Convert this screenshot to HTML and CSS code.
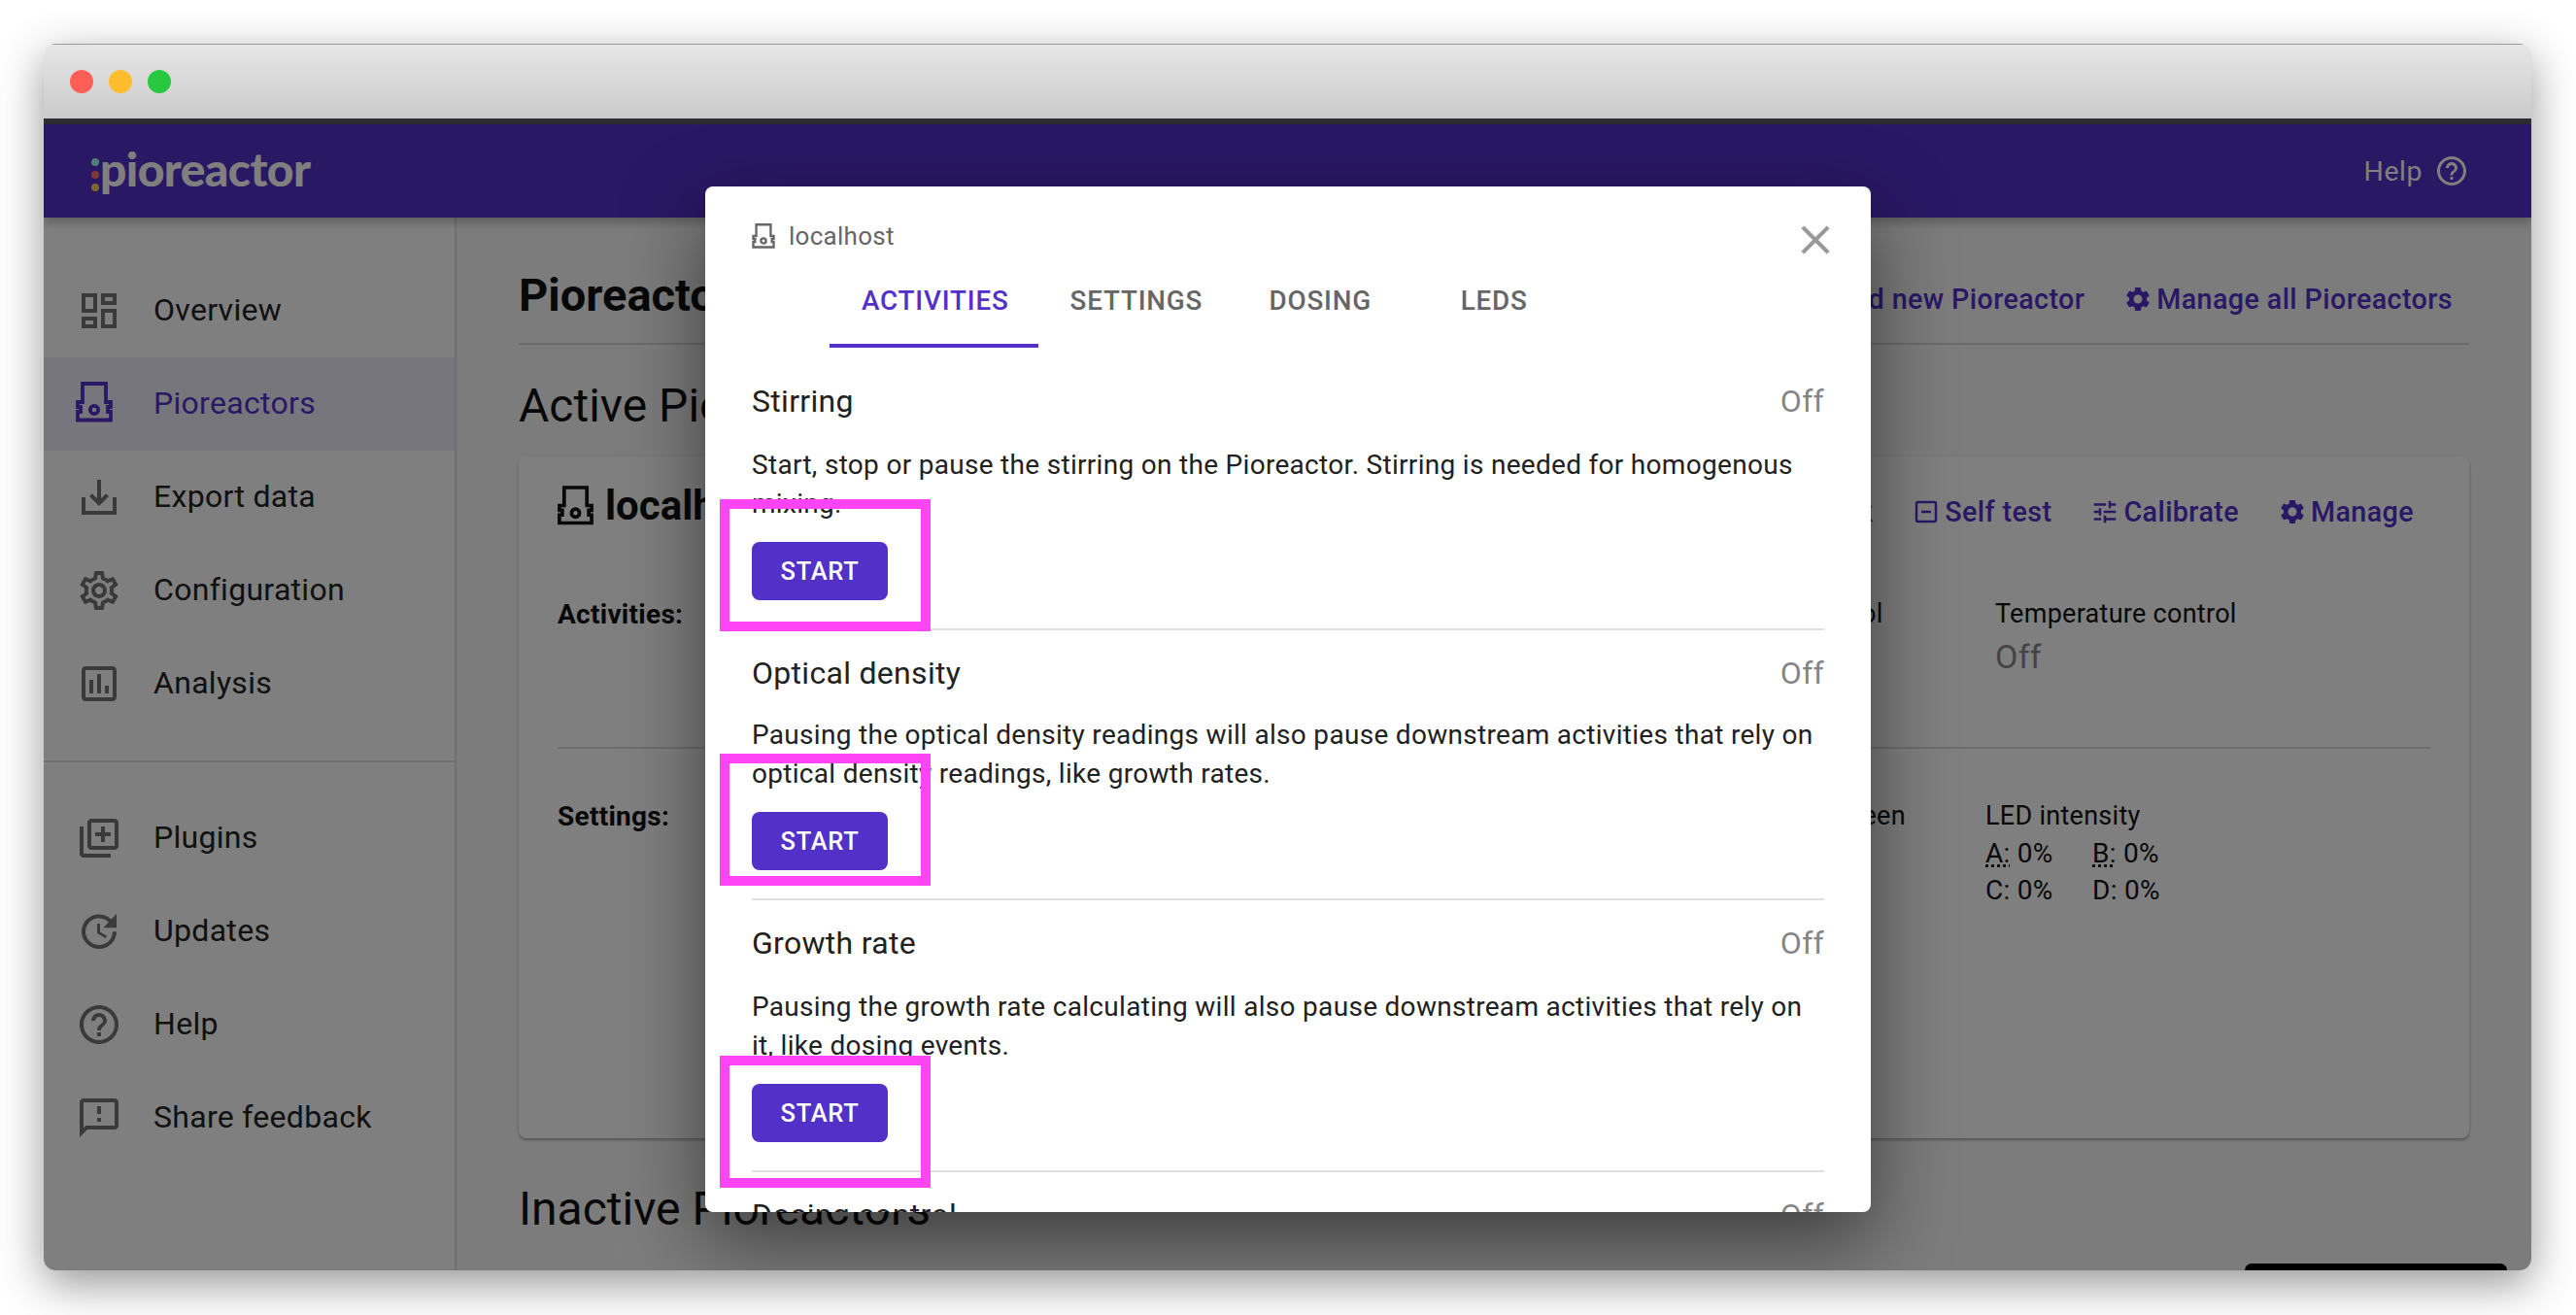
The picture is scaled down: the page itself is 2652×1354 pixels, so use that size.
FILE: index.html
```html
<!DOCTYPE html>
<html lang="en">
<head>
    <meta charset="UTF-8">
    <meta name="viewport" content="width=device-width, initial-scale=1.0">
    <title>Pioreactor - Pioreactors</title>
    <link rel="stylesheet" href="styles.css">
</head>
<body>

<!-- icon sprite -->
<svg class="sprite" xmlns="http://www.w3.org/2000/svg">
    <symbol id="i-dashboard" viewBox="0 0 24 24"><path d="M19 5v2h-4V5h4M9 5v6H5V5h4m10 8v6h-4v-6h4M9 17v2H5v-2h4M21 3h-8v6h8V3zM11 3H3v10h8V3zm10 8h-8v10h8V11zm-10 4H3v6h8v-6z"/></symbol>
    <symbol id="i-pioreactor" viewBox="0 0 38 42"><path fill="none" stroke="currentColor" stroke-width="3.8" d="M7 2H31V21H36V26H33V31H36V39.5H2V31H5V26H2V21H7Z"/><circle cx="19" cy="29" r="4.2" fill="none" stroke="currentColor" stroke-width="3.8"/></symbol>
    <symbol id="i-export" viewBox="0 0 24 24"><path d="M19 12v7H5v-7H3v9h18v-9h-2zm-6 .67l2.59-2.58L17 11.5l-5 5-5-5 1.41-1.41L11 12.67V3h2v9.67z"/></symbol>
    <symbol id="i-config" viewBox="0 0 24 24"><path d="M19.43 12.98c.04-.32.07-.64.07-.98 0-.34-.03-.66-.07-.98l2.11-1.65c.19-.15.24-.42.12-.64l-2-3.46c-.09-.16-.26-.25-.44-.25-.06 0-.12.01-.17.03l-2.49 1c-.52-.4-1.08-.73-1.69-.98l-.38-2.65C14.46 2.18 14.25 2 14 2h-4c-.25 0-.46.18-.49.42l-.38 2.65c-.61.25-1.17.59-1.69.98l-2.49-1c-.06-.02-.12-.03-.18-.03-.17 0-.34.09-.43.25l-2 3.46c-.13.22-.07.49.12.64l2.11 1.65c-.04.32-.07.65-.07.98 0 .33.03.66.07.98l-2.11 1.65c-.19.15-.24.42-.12.64l2 3.46c.09.16.26.25.44.25.06 0 .12-.01.17-.03l2.49-1c.52.4 1.08.73 1.69.98l.38 2.65c.03.24.24.42.49.42h4c.25 0 .46-.18.49-.42l.38-2.65c.61-.25 1.17-.59 1.69-.98l2.49 1c.06.02.12.03.18.03.17 0 .34-.09.43-.25l2-3.46c.12-.22.07-.49-.12-.64l-2.11-1.65zm-1.98-1.71c.04.31.05.52.05.73 0 .21-.02.43-.05.73l-.14 1.13.89.7 1.08.84-.7 1.21-1.27-.51-1.04-.42-.9.68c-.43.32-.84.56-1.25.73l-1.06.43-.16 1.13-.2 1.35h-1.4l-.19-1.35-.16-1.13-1.06-.43c-.43-.18-.83-.41-1.23-.71l-.91-.7-1.06.43-1.27.51-.7-1.21 1.08-.84.89-.7-.14-1.13c-.03-.31-.05-.54-.05-.74s.02-.43.05-.73l.14-1.13-.89-.7-1.08-.84.7-1.21 1.27.51 1.04.42.9-.68c.43-.32.84-.56 1.25-.73l1.06-.43.16-1.13.2-1.35h1.39l.19 1.35.16 1.13 1.06.43c.43.18.83.41 1.23.71l.91.7 1.06-.43 1.27-.51.7 1.21-1.07.85-.89.7.14 1.13zM12 8c-2.21 0-4 1.79-4 4s1.79 4 4 4 4-1.79 4-4-1.79-4-4-4zm0 6c-1.1 0-2-.9-2-2s.9-2 2-2 2 .9 2 2-.9 2-2 2z"/></symbol>
    <symbol id="i-chart" viewBox="0 0 24 24"><path d="M9 17H7v-7h2v7zm4 0h-2V7h2v10zm4 0h-2v-4h2v4zm2 2H5V5h14v14zm0-16H5c-1.1 0-2 .9-2 2v14c0 1.1.9 2 2 2h14c1.1 0 2-.9 2-2V5c0-1.1-.9-2-2-2z"/></symbol>
    <symbol id="i-plugins" viewBox="0 0 24 24"><path d="M4 6H2v14c0 1.1.9 2 2 2h14v-2H4V6zm16-4H8c-1.1 0-2 .9-2 2v12c0 1.1.9 2 2 2h12c1.1 0 2-.9 2-2V4c0-1.1-.9-2-2-2zm0 14H8V4h12v12zm-7-2h2v-3h3V9h-3V6h-2v3h-3v2h3z"/></symbol>
    <symbol id="i-update" viewBox="0 0 24 24"><path d="M21 10.12h-6.78l2.74-2.82c-2.73-2.7-7.15-2.8-9.88-.1-2.73 2.71-2.73 7.08 0 9.79s7.15 2.71 9.88 0C18.32 15.65 19 14.08 19 12.1h2c0 1.98-.88 4.55-2.64 6.29-3.51 3.48-9.21 3.48-12.72 0-3.5-3.47-3.53-9.11-.02-12.58s9.14-3.47 12.65 0L21 3v7.12zM12.5 8v4.25l3.5 2.08-.72 1.21L11 13V8h1.5z"/></symbol>
    <symbol id="i-help" viewBox="0 0 24 24"><path d="M11 18h2v-2h-2v2zm1-16C6.48 2 2 6.48 2 12s4.48 10 10 10 10-4.48 10-10S17.52 2 12 2zm0 18c-4.41 0-8-3.59-8-8s3.59-8 8-8 8 3.59 8 8-3.59 8-8 8zm0-14c-2.21 0-4 1.79-4 4h2c0-1.1.9-2 2-2s2 .9 2 2c0 2-3 1.75-3 5h2c0-2.25 3-2.5 3-5 0-2.21-1.79-4-4-4z"/></symbol>
    <symbol id="i-feedback" viewBox="0 0 24 24"><path d="M20 2H4c-1.1 0-1.99.9-1.99 2L2 22l4-4h14c1.1 0 2-.9 2-2V4c0-1.1-.9-2-2-2zm0 14H5.17L4 17.17V4h16v12zm-9-4h2v2h-2zm0-6h2v4h-2z"/></symbol>
    <symbol id="i-close" viewBox="0 0 24 24"><path d="M19 6.41L17.59 5 12 10.59 6.41 5 5 6.41 10.59 12 5 17.59 6.41 19 12 13.41 17.59 19 19 17.59 13.41 12z"/></symbol>
    <symbol id="i-gear" viewBox="0 0 24 24"><path d="M19.14 12.94c.04-.3.06-.61.06-.94 0-.32-.02-.64-.07-.94l2.03-1.58c.18-.14.23-.41.12-.61l-1.92-3.32c-.12-.22-.37-.29-.59-.22l-2.39.96c-.5-.38-1.03-.7-1.62-.94l-.36-2.54c-.04-.24-.24-.41-.48-.41h-3.84c-.24 0-.43.17-.47.41l-.36 2.54c-.59.24-1.13.57-1.62.94l-2.39-.96c-.22-.08-.47 0-.59.22L2.74 8.87c-.12.21-.08.47.12.61l2.03 1.58c-.05.3-.09.63-.09.94s.02.64.07.94l-2.03 1.58c-.18.14-.23.41-.12.61l1.92 3.32c.12.22.37.29.59.22l2.39-.96c.5.38 1.03.7 1.62.94l.36 2.54c.05.24.24.41.48.41h3.84c.24 0 .44-.17.47-.41l.36-2.54c.59-.24 1.13-.56 1.62-.94l2.39.96c.22.08.47 0 .59-.22l1.92-3.32c.12-.22.07-.47-.12-.61l-2.01-1.58zM12 15.6c-1.98 0-3.6-1.62-3.6-3.6s1.62-3.6 3.6-3.6 3.6 1.62 3.6 3.6-1.62 3.6-3.6 3.6z"/></symbol>
    <symbol id="i-selftest" viewBox="0 0 24 24"><path d="M8 11h8v2H8zm11-8H5c-1.1 0-2 .9-2 2v14c0 1.1.9 2 2 2h14c1.1 0 2-.9 2-2V5c0-1.1-.9-2-2-2zm0 16H5V5h14v14z"/></symbol>
    <symbol id="i-tune" viewBox="0 0 24 24"><path d="M3 17v2h6v-2H3zM3 5v2h10V5H3zm10 16v-2h8v-2h-8v-2h-2v6h2zM7 9v2H3v2h4v2h2V9H7zm14 4v-2H11v2h10zm-6-4h2V7h4V5h-4V3h-2v6z"/></symbol>
    <symbol id="i-blink" viewBox="0 0 24 24"><path d="M9 21c0 .55.45 1 1 1h4c.55 0 1-.45 1-1v-1H9v1zm3-19C8.14 2 5 5.14 5 9c0 2.38 1.19 4.47 3 5.74V17c0 .55.45 1 1 1h6c.55 0 1-.45 1-1v-2.26c1.81-1.27 3-3.36 3-5.74 0-3.86-3.14-7-7-7z"/></symbol>
</svg>

<div class="window">
    <div class="titlebar">
        <span class="light light-red"></span>
        <span class="light light-yellow"></span>
        <span class="light light-green"></span>
    </div>

    <header class="topbar">
        <div class="logo">
            <span class="logo-dots"><i class="dot-teal"></i><i class="dot-red"></i><i class="dot-orange"></i></span>
            <span>pioreactor</span>
        </div>
        <a class="help-link">Help <svg class="icon-help"><use href="#i-help"/></svg></a>
    </header>

    <div class="app-body">
        <nav class="sidebar">
            <a class="nav-item"><svg class="nav-icon"><use href="#i-dashboard"/></svg>Overview</a>
            <a class="nav-item active"><svg class="nav-icon nav-icon-pio"><use href="#i-pioreactor"/></svg>Pioreactors</a>
            <a class="nav-item"><svg class="nav-icon"><use href="#i-export"/></svg>Export data</a>
            <a class="nav-item"><svg class="nav-icon"><use href="#i-config"/></svg>Configuration</a>
            <a class="nav-item"><svg class="nav-icon"><use href="#i-chart"/></svg>Analysis</a>
            <div class="nav-divider"></div>
            <a class="nav-item"><svg class="nav-icon"><use href="#i-plugins"/></svg>Plugins</a>
            <a class="nav-item"><svg class="nav-icon"><use href="#i-update"/></svg>Updates</a>
            <a class="nav-item"><svg class="nav-icon"><use href="#i-help"/></svg>Help</a>
            <a class="nav-item"><svg class="nav-icon"><use href="#i-feedback"/></svg>Share feedback</a>
        </nav>

        <main class="content">
            <div class="page-head">
                <h1>Pioreactors</h1>
                <div class="page-links">
                    <a class="action">Add new Pioreactor</a>
                    <a class="action"><svg class="action-icon"><use href="#i-gear"/></svg>Manage all Pioreactors</a>
                </div>
            </div>

            <h2 class="section-title">Active Pioreactors</h2>

            <section class="card">
                <div class="card-head">
                    <div class="card-title"><svg class="card-title-icon"><use href="#i-pioreactor"/></svg>localhost</div>
                    <div class="card-actions">
                        <a class="action"><svg class="action-icon"><use href="#i-blink"/></svg>Blink</a>
                        <a class="action"><svg class="action-icon"><use href="#i-selftest"/></svg>Self test</a>
                        <a class="action"><svg class="action-icon"><use href="#i-tune"/></svg>Calibrate</a>
                        <a class="action"><svg class="action-icon"><use href="#i-gear"/></svg>Manage</a>
                    </div>
                </div>

                <div class="card-row card-row-activities">
                    <div class="row-label">Activities:</div>
                    <div class="cell"><div>Stirring</div><div class="cell-off">Off</div></div>
                    <div class="cell"><div>Optical density</div><div class="cell-off">Off</div></div>
                    <div class="cell"><div>Growth rate</div><div class="cell-off">Off</div></div>
                    <div class="cell"><div>Dosing control</div><div class="cell-off">Off</div></div>
                    <div class="cell"><div>LED control</div><div class="cell-off">Off</div></div>
                    <div class="cell"><div>Temperature control</div><div class="cell-off">Off</div></div>
                </div>

                <div class="card-row card-row-settings">
                    <div class="row-label">Settings:</div>
                    <div class="cell cell-between">Time between</div>
                    <div class="cell cell-leds">
                        <div>LED intensity</div>
                        <div class="led-grid">
                            <span><abbr>A:</abbr> 0%</span><span><abbr>B:</abbr> 0%</span>
                            <span>C: 0%</span><span>D: 0%</span>
                        </div>
                    </div>
                </div>
            </section>

            <h2 class="section-title section-inactive">Inactive Pioreactors</h2>
        </main>
    </div>

    <div class="backdrop"></div>
    <div class="snackbar"></div>

    <div class="modal">
        <div class="modal-head">
            <svg class="modal-head-icon"><use href="#i-pioreactor"/></svg>
            <span>localhost</span>
            <svg class="modal-close"><use href="#i-close"/></svg>
        </div>

        <div class="tabs">
            <a class="tab active">Activities</a>
            <a class="tab">Settings</a>
            <a class="tab">Dosing</a>
            <a class="tab">LEDs</a>
        </div>

        <div class="activity">
            <div class="activity-top"><span>Stirring</span><span class="off">Off</span></div>
            <p class="activity-desc">Start, stop or pause the stirring on the Pioreactor. Stirring is needed for homogenous mixing.</p>
            <div class="start-wrap"><button class="start-btn">Start</button><span class="mark mark-1"></span></div>
        </div>

        <div class="activity activity-short">
            <div class="activity-top"><span>Optical density</span><span class="off">Off</span></div>
            <p class="activity-desc">Pausing the optical density readings will also pause downstream activities that rely on optical density readings, like growth rates.</p>
            <div class="start-wrap"><button class="start-btn">Start</button><span class="mark mark-2"></span></div>
        </div>

        <div class="activity">
            <div class="activity-top"><span>Growth rate</span><span class="off">Off</span></div>
            <p class="activity-desc">Pausing the growth rate calculating will also pause downstream activities that rely on it, like dosing events.</p>
            <div class="start-wrap"><button class="start-btn">Start</button><span class="mark mark-3"></span></div>
        </div>

        <div class="activity">
            <div class="activity-top"><span>Dosing control</span><span class="off">Off</span></div>
        </div>
    </div>
</div>

</body>
</html>
```

FILE: styles.css
```css
* {
    box-sizing: border-box;
}

body {
    margin: 0;
    padding: 45px;
    width: 2652px;
    height: 1354px;
    overflow: hidden;
    background-color: #ffffff;
    font-family: Roboto, "Liberation Sans", sans-serif;
    color: #111111;
}

.sprite {
    display: none;
}

svg {
    fill: currentColor;
    flex-shrink: 0;
}

/* mac window */
.window {
    position: relative;
    width: 2561px;
    height: 1263px;
    border-radius: 12px;
    overflow: hidden;
    display: flex;
    flex-direction: column;
    background-color: #fafafa;
}

body::before {
    content: "";
    position: absolute;
    left: 45px;
    top: 45px;
    width: 2561px;
    height: 1263px;
    border-radius: 12px;
    box-shadow: 0 14px 46px rgba(0, 0, 0, 0.42);
}

.titlebar {
    flex: 0 0 83px;
    display: flex;
    align-items: center;
    gap: 16px;
    padding-left: 27px;
    background: linear-gradient(#e6e6e6, #cbcbcb);
    border-top: 1px solid #9a9a9a;
    border-bottom: 6px solid #2e2e30;
}

.light {
    width: 24px;
    height: 24px;
    border-radius: 50%;
}

.light-red { background-color: #ff5f57; }
.light-yellow { background-color: #ffbd2e; }
.light-green { background-color: #28c840; }

/* top bar */
.topbar {
    flex: 0 0 96px;
    display: flex;
    align-items: center;
    justify-content: space-between;
    padding: 0 64px 0 49px;
    background-color: #5331c9;
    color: #ffffff;
    box-shadow: 0 4px 10px rgba(0, 0, 0, 0.3);
    z-index: 1;
}

.logo {
    display: flex;
    align-items: center;
    padding-bottom: 4px;
    font-family: Lato, sans-serif;
    font-weight: 900;
    font-size: 48px;
    letter-spacing: -0.6px;
    line-height: 1;
}

.logo-dots {
    display: flex;
    flex-direction: column;
    gap: 5px;
    margin: 12px 1px 0 0;
}

.logo-dots i {
    display: block;
    width: 8px;
    height: 8px;
    border-radius: 50%;
}

.dot-teal { background-color: #9ffff0; }
.dot-red { background-color: #ff7070; }
.dot-orange { background-color: #ffcc55; }

.help-link {
    display: flex;
    align-items: center;
    gap: 12px;
    font-size: 28.5px;
    letter-spacing: 0.5px;
    color: #ffffff;
}

.icon-help {
    width: 36px;
    height: 36px;
}

/* sidebar */
.app-body {
    flex: 1;
    display: flex;
    min-height: 0;
}

.sidebar {
    flex: 0 0 425px;
    padding-top: 48px;
    background-color: #ffffff;
    border-right: 2px solid #e0e0e0;
}

.nav-item {
    height: 96px;
    display: flex;
    align-items: center;
    gap: 32px;
    padding: 0 0 3px 33px;
    font-size: 32px;
    letter-spacing: 0.3px;
    color: #222222;
}

.nav-icon {
    width: 48px;
    height: 48px;
    margin-top: 3px;
    color: #757575;
}

.nav-icon-pio {
    width: 38px;
    height: 42px;
    margin: -1px 10px 0 0;
    color: #5331c9;
}

.nav-item.active {
    background-color: #eeecf9;
    color: #5331c9;
}

.nav-divider {
    height: 2px;
    margin: 31px 0 30px;
    background-color: #e0e0e0;
}

/* main content */
.content {
    flex: 1;
    min-width: 0;
    padding: 30px 64px 0;
    background-color: #f8f8f8;
}

.page-head {
    height: 101px;
    display: flex;
    align-items: center;
    justify-content: space-between;
    padding-right: 17px;
    border-bottom: 2px solid #d8d8d8;
}

h1 {
    margin: 0;
    font-size: 47px;
    font-weight: 700;
}

.page-links {
    display: flex;
    gap: 40px;
    padding-top: 9px;
}

.action {
    display: flex;
    align-items: center;
    gap: 4px;
    font-size: 28.7px;
    font-weight: 500;
    letter-spacing: 0.4px;
    color: #5331c9;
}

.action-icon {
    width: 30px;
    height: 30px;
}

.section-title {
    height: 115px;
    display: flex;
    align-items: center;
    margin: 0;
    padding-top: 10px;
    font-size: 48px;
    font-weight: 400;
}

.section-inactive {
    margin-top: 10px;
}

.card {
    height: 702px;
    padding: 0 40px;
    background-color: #ffffff;
    border-radius: 8px;
    box-shadow: 0 2px 3px rgba(0, 0, 0, 0.3);
}

.card-head {
    height: 100px;
    display: flex;
    align-items: center;
    justify-content: space-between;
}

.card-title {
    display: flex;
    align-items: center;
    gap: 12px;
    font-size: 42px;
    font-weight: 700;
}

.card-title-icon {
    width: 37px;
    height: 41px;
}

.card-actions {
    display: flex;
    gap: 40px;
    margin-right: 17px;
    padding-top: 14px;
}

.card-row {
    display: grid;
    grid-template-columns: 235px repeat(4, 247px) 257px 1fr;
    font-size: 27px;
    letter-spacing: 0.28px;
}

.card-row-activities {
    height: 201px;
    padding-top: 44px;
    border-bottom: 2px solid #dcdcdc;
}

.card-row-settings {
    padding-top: 51px;
    grid-template-columns: 235px repeat(4, 245px) 255px 1fr;
}

.row-label {
    padding-top: 1px;
    font-size: 28px;
    font-weight: 700;
    line-height: 36px;
}

.cell {
    line-height: 36px;
}

.cell-off {
    margin-top: 4px;
    font-size: 34px;
    line-height: 44px;
    color: #888888;
}

.cell-between {
    grid-column: 6;
}

.cell-leds {
    grid-column: 7;
}

.led-grid {
    display: grid;
    grid-template-columns: 110px 110px;
    font-size: 28px;
    line-height: 38px;
    margin-top: 2px;
}

abbr {
    text-decoration: underline dotted;
}

/* modal */
.backdrop {
    position: absolute;
    top: 83px;
    left: 0;
    right: 0;
    bottom: 0;
    background-color: rgba(0, 0, 0, 0.5);
    z-index: 2;
}

.snackbar {
    position: absolute;
    right: 25px;
    bottom: 0;
    width: 270px;
    height: 7px;
    border-radius: 8px 8px 0 0;
    background-color: #000000;
    z-index: 3;
}

.modal {
    position: absolute;
    left: 681px;
    top: 147px;
    width: 1200px;
    height: 1056px;
    padding: 0 48px;
    overflow: hidden;
    border-radius: 8px;
    background-color: #ffffff;
    color: #212121;
    box-shadow: 0 30px 80px rgba(0, 0, 0, 0.5);
    z-index: 4;
}

.modal-head {
    height: 70px;
    display: flex;
    align-items: center;
    gap: 14px;
    padding-top: 32px;
    font-size: 26px;
    letter-spacing: 0.28px;
    color: #666666;
}

.modal-head-icon {
    width: 24px;
    height: 26px;
}

.modal-close {
    position: absolute;
    right: 32px;
    top: 30px;
    width: 50px;
    height: 50px;
    color: #999999;
}

.tabs {
    height: 96px;
    display: flex;
    margin: 0 0 11px 80px;
}

.tab {
    min-width: 179px;
    padding: 2px 30px 0 33px;
    display: flex;
    align-items: center;
    justify-content: center;
    font-size: 27.8px;
    font-weight: 500;
    letter-spacing: 0.8px;
    text-transform: uppercase;
    color: #666666;
    border-bottom: 4px solid transparent;
}

.tab.active {
    color: #5331c9;
    border-bottom-color: #5331c9;
}

.activity {
    height: 280px;
    padding-top: 24px;
    border-bottom: 2px solid #e0e0e0;
}

.activity-short {
    height: 278px;
}

.activity-top {
    display: flex;
    justify-content: space-between;
    font-size: 32px;
    letter-spacing: 0.3px;
    line-height: 40px;
}

.off {
    color: #858585;
}

.activity-desc {
    margin: 26px 0 19px;
    font-size: 28px;
    letter-spacing: 0.3px;
    line-height: 40px;
}

.activity-short .activity-desc {
    margin: 24px 0 19px;
}

.start-wrap {
    position: relative;
    display: inline-block;
}

.start-btn {
    display: block;
    width: 140px;
    height: 60px;
    border: none;
    border-radius: 8px;
    background-color: #5331c9;
    color: #ffffff;
    font-family: inherit;
    font-size: 25.5px;
    font-weight: 500;
    letter-spacing: 0.7px;
    text-transform: uppercase;
}

/* pink frames drawn over the buttons */
.mark {
    position: absolute;
    left: -33px;
    right: -44px;
    border: 10px solid #ff44f5;
}

.mark-1 { top: -44px; bottom: -32px; }
.mark-2 { top: -60px; bottom: -16px; }
.mark-3 { top: -29px; bottom: -47px; }
```
